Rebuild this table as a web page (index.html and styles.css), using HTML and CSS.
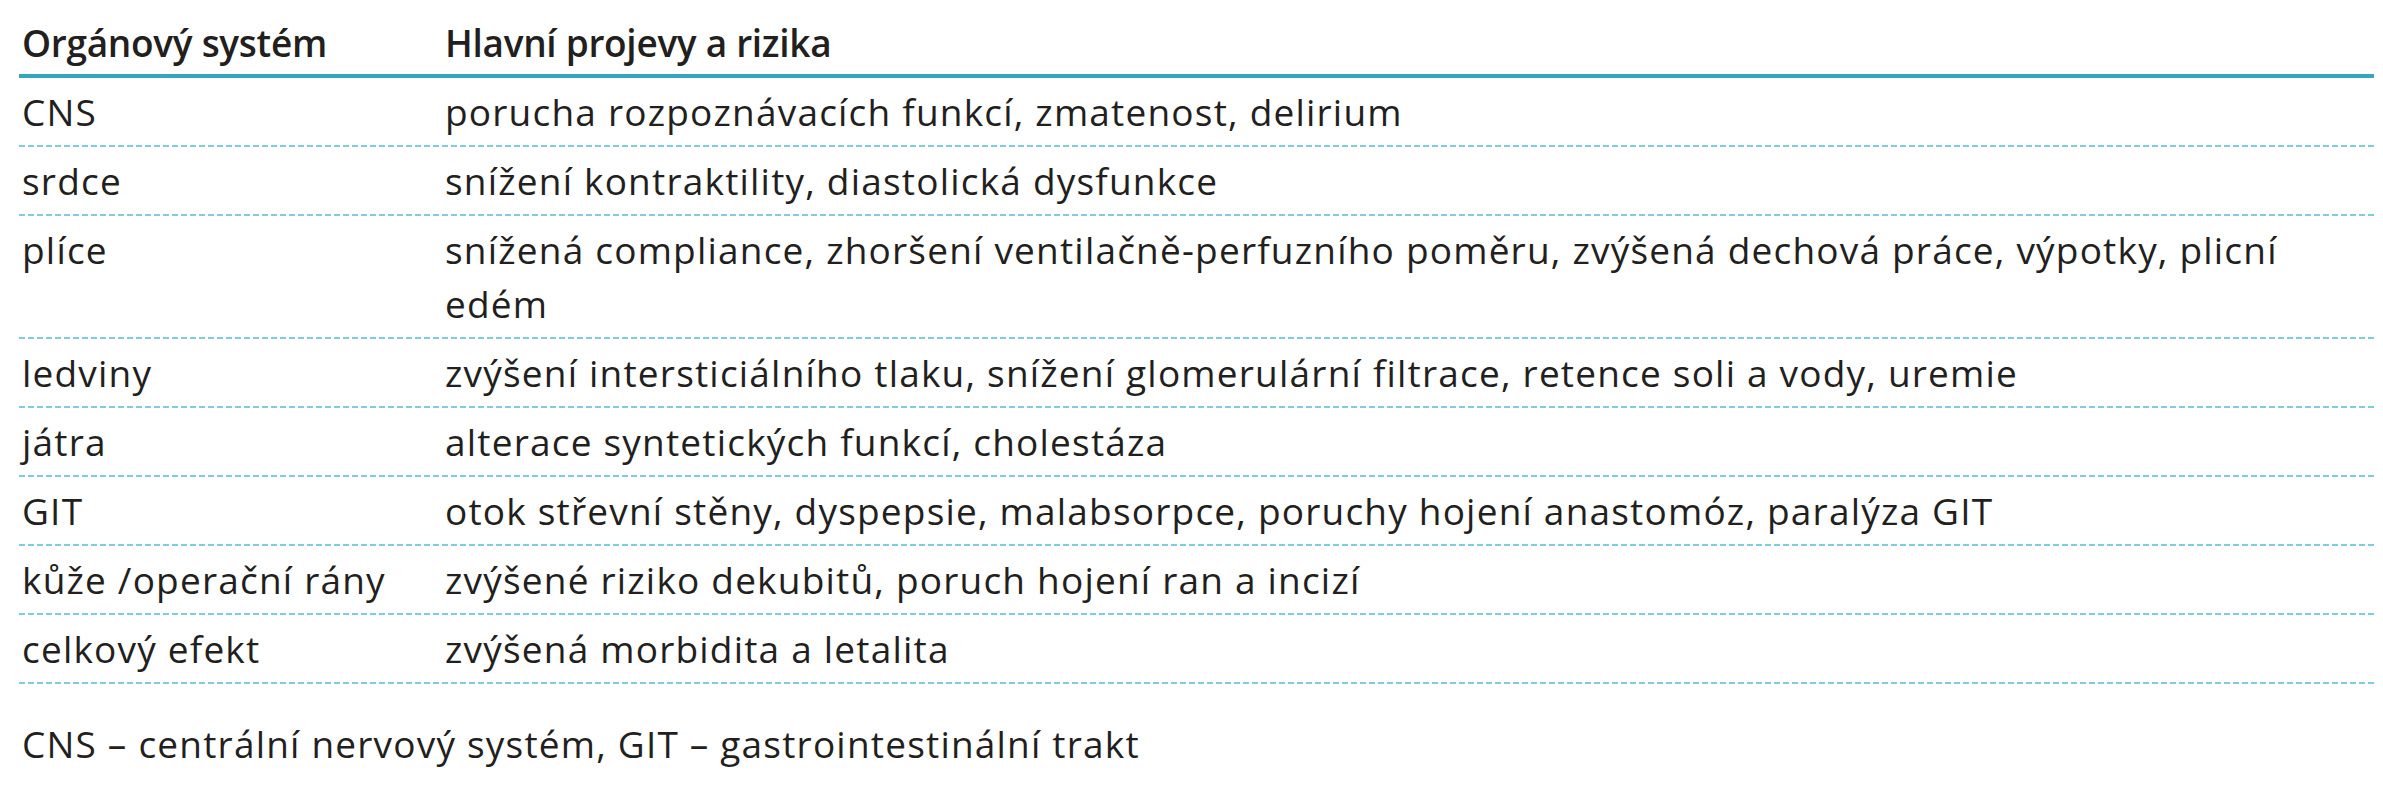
FILE: index.html
```html
<!DOCTYPE html>
<html lang="cs">
<head>
<meta charset="utf-8">
<title>Orgánový systém – hlavní projevy a rizika</title>
<link rel="stylesheet" href="styles.css">
</head>
<body>
<div class="page">
  <div class="table">
    <div class="row head">
      <div class="cell c1">Orgánový systém</div>
      <div class="cell c2">Hlavní projevy a rizika</div>
    </div>
    <div class="row">
      <div class="cell c1">CNS</div>
      <div class="cell c2">porucha rozpoznávacích funkcí, zmatenost, delirium</div>
    </div>
    <div class="row">
      <div class="cell c1">srdce</div>
      <div class="cell c2">snížení kontraktility, diastolická dysfunkce</div>
    </div>
    <div class="row">
      <div class="cell c1">plíce</div>
      <div class="cell c2">snížená compliance, zhoršení ventilačně-perfuzního poměru, zvýšená dechová práce, výpotky, plicní edém</div>
    </div>
    <div class="row">
      <div class="cell c1">ledviny</div>
      <div class="cell c2">zvýšení intersticiálního tlaku, snížení glomerulární filtrace, retence soli a vody, uremie</div>
    </div>
    <div class="row">
      <div class="cell c1">játra</div>
      <div class="cell c2">alterace syntetických funkcí, cholestáza</div>
    </div>
    <div class="row">
      <div class="cell c1">GIT</div>
      <div class="cell c2">otok střevní stěny, dyspepsie, malabsorpce, poruchy hojení anastomóz, paralýza GIT</div>
    </div>
    <div class="row">
      <div class="cell c1">kůže /operační rány</div>
      <div class="cell c2">zvýšené riziko dekubitů, poruch hojení ran a incizí</div>
    </div>
    <div class="row">
      <div class="cell c1">celkový efekt</div>
      <div class="cell c2">zvýšená morbidita a letalita</div>
    </div>
  </div>
  <p class="note">CNS – centrální nervový systém, GIT – gastrointestinální trakt</p>
</div>
</body>
</html>
```

FILE: styles.css
```css
html, body {
  margin: 0;
  padding: 0;
  background: #ffffff;
}

body {
  font-family: "Open Sans", "Noto Sans", "Liberation Sans", sans-serif;
  font-size: 37px;
  font-weight: 500;
  line-height: 54px;
  color: #231f20;
  letter-spacing: 1.2px;
}

.page {
  padding-left: 19px;
  width: 2355px;
}

.table {
  display: flex;
  flex-direction: column;
}

.row {
  display: grid;
  grid-template-columns: 422px 1fr;
  padding: 7px 0 8px;
  background-image: repeating-linear-gradient(to right, #7fcbe0 0 6px, transparent 6px 9px);
  background-repeat: no-repeat;
  background-position: left bottom;
  background-size: 100% 2px;
}

.row.head {
  padding: 16px 0 8px;
  font-weight: 600;
  letter-spacing: -0.3px;
  background-image: linear-gradient(#35a6c1, #35a6c1);
  background-size: 100% 4px;
}

.cell.c1 {
  padding-left: 3px;
}

.cell.c2 {
  padding-left: 4px;
}

.note {
  margin: 33px 0 0;
  padding-left: 3px;
}
```
